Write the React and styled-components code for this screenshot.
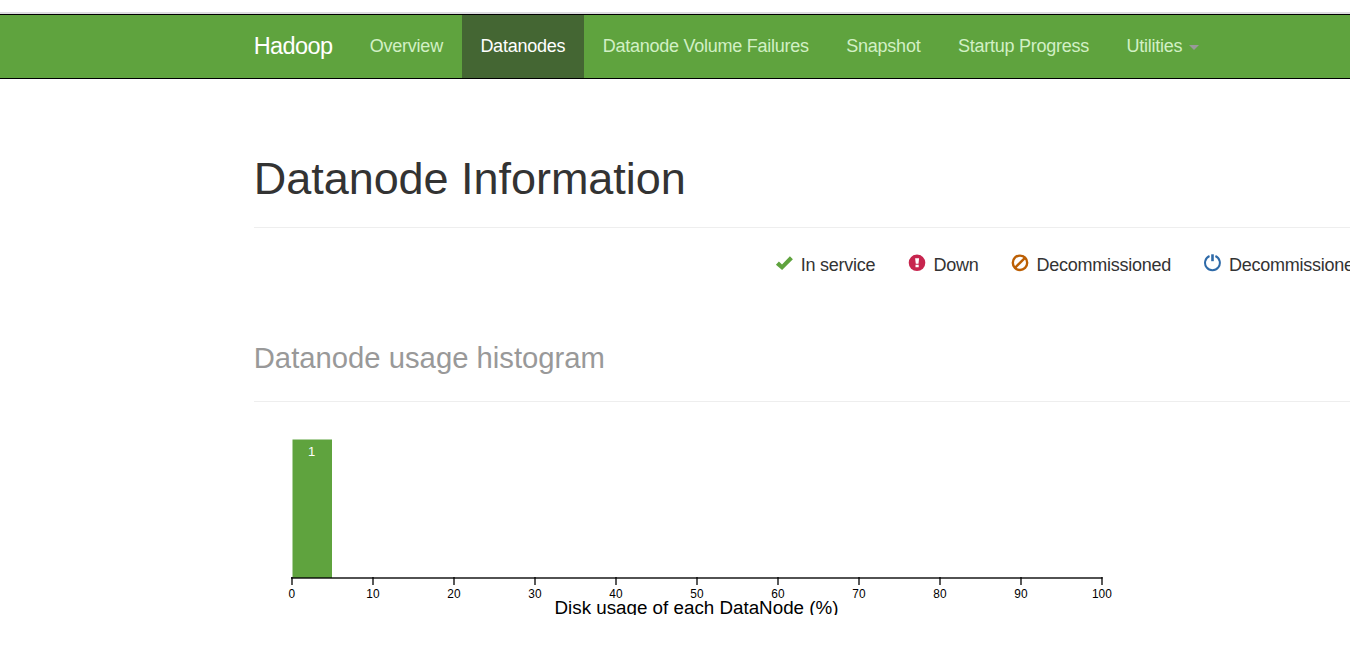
import React from "react";
import styled, { createGlobalStyle } from "styled-components";

const GlobalStyle = createGlobalStyle`
  html, body { margin: 0; background: #fff; overflow: hidden; }
  body { font-family: "Liberation Sans", Arial, sans-serif; font-size: 18px; letter-spacing: -0.25px; line-height: 25px; color: #333; }
`;
const Page = styled.div`
  width: 100%;
  height: 655px;
  overflow: hidden;
  padding-top: 12px;
  box-sizing: border-box;
`;
const Header = styled.header`
  display: flex;
  box-sizing: border-box;
  height: 67px;
  padding-left: 253.75px;
  background: #5fa33e;
  border-bottom: 1px solid #000;
  border-top: 2px solid #dcdce0;
  box-shadow: inset 0 1px 0 #000;
`;
const Brand = styled.a`
  padding: 20px 18.75px 0 0;
  font-size: 23.5px;
  letter-spacing: -0.62px;
  line-height: 25px;
  color: #fff;
`;
const Nav = styled.nav`
  display: flex;
  padding-top: 1px;
`;
const NavItem = styled.a`
  display: flex;
  align-items: center;
  gap: 7px;
  padding: 0 18.75px;
  white-space: nowrap;
  color: ${(p) => (p.$active ? "#fff" : "#d2f0c5")};
  background: ${(p) => (p.$active ? "#446633" : "transparent")};
`;
const Caret = styled.span`
  margin-top: 2px;
  border: 5px solid transparent;
  border-top-color: #999;
  border-bottom: 0;
`;
const Main = styled.main`
  padding-left: 253.75px;
`;
const Title = styled.h1`
  margin: 0;
  padding-top: 75px;
  height: 73px;
  font-size: 45px;
  letter-spacing: -0.04px;
  line-height: 50px;
  font-weight: 400;
  border-bottom: 1px solid #eee;
`;
const Legend = styled.ul`
  display: flex;
  margin: 0;
  padding: 25px 0 0 521.4px;
  list-style: none;
  width: 900px;
`;
const LegendItem = styled.li`
  display: flex;
  gap: 7.5px;
  width: ${(p) => p.$width}px;
  flex: none;
  white-space: nowrap;
  svg { margin-top: 1px; flex: none; }
`;
const Subtitle = styled.h3`
  margin: 0;
  padding-top: 64px;
  height: 59px;
  font-size: 29.25px;
  letter-spacing: 0;
  line-height: 33px;
  font-weight: 400;
  color: #999;
  border-bottom: 1px solid #eee;
`;
const Chart = styled.svg`
  display: block;
  overflow: hidden;
  letter-spacing: 0;
  font-family: "Liberation Sans", Arial, sans-serif;
`;

const navItems = ["Overview", "Datanodes", "Datanode Volume Failures", "Snapshot", "Startup Progress", "Utilities"];

const CheckIcon = () => (
  <svg width="18" height="18" viewBox="0 0 18 18">
    <path fill="#5fa33e" d="M0.9 10.8 3.9 7.6 7 10.4 14.9 2.3 17.9 5.2 7.1 16.1Z" />
  </svg>
);
const DownIcon = () => (
  <svg width="18" height="18" viewBox="0 0 18 18">
    <circle cx="9" cy="8.8" r="8.3" fill="#c7254e" />
    <path fill="#fff" d="M7.1 4.2H11.1L10.5 9.8H7.8ZM7.5 10.8H10.7V13.3H7.5Z" />
  </svg>
);
const BanIcon = () => (
  <svg width="18" height="18" viewBox="0 0 18 18" fill="none" stroke="#bc5f04" strokeWidth="2.4">
    <circle cx="9" cy="8.8" r="7.2" />
    <path d="M4 13.8 14 3.8" />
  </svg>
);
const PowerIcon = () => (
  <svg width="18" height="18" viewBox="0 0 18 18" fill="none" stroke="#2e6aa8" strokeWidth="2">
    <path d="M6.5 2A7.4 7.4 0 1 0 12.4 2" />
    <path d="M9.5 0.3V7.2" strokeWidth="2.6" />
  </svg>
);

const legend = [
  { label: "In service", Icon: CheckIcon, width: 132.8 },
  { label: "Down", Icon: DownIcon, width: 103 },
  { label: "Decommissioned", Icon: BanIcon, width: 192.5 },
  { label: "Decommissioned", Icon: PowerIcon, width: 160 },
];
const ticks = [0, 10, 20, 30, 40, 50, 60, 70, 80, 90, 100];

const Histogram = () => (
  <Chart width="900" height="213" viewBox="254 402 900 213">
    <rect x="292.5" y="439.5" width="39.5" height="138.5" fill="#5fa33e" />
    <text x="311.7" y="456" fontSize="13" textAnchor="middle" fill="#fff">1</text>
    <path d="M291 578H1102.5" stroke="#000" strokeOpacity="0.68" strokeWidth="2" />
    {ticks.map((t) => (
      <g key={t}>
        <path d={`M${292 + t * 8.1} 577V585`} stroke="#000" strokeWidth="1.3" />
        <text
          x={291.9 + t * 8.1}
          y="598"
          fontSize="13.5"
          textAnchor="middle"
          textLength={String(t).length * 6.6}
          lengthAdjust="spacingAndGlyphs"
        >{t}</text>
      </g>
    ))}
    <text x="554.5" y="614" fontSize="18.8">Disk usage of each DataNode (%)</text>
  </Chart>
);

export default function App() {
  return (
    <Page>
      <GlobalStyle />
      <Header>
        <Brand>Hadoop</Brand>
        <Nav>
          {navItems.map((n) => (
            <NavItem key={n} $active={n === "Datanodes"}>
              {n}
              {n === "Utilities" && <Caret />}
            </NavItem>
          ))}
        </Nav>
      </Header>
      <Main>
        <Title>Datanode Information</Title>
        <Legend>
          {legend.map(({ label, Icon, width }, i) => (
            <LegendItem key={i} $width={width}>
              <Icon />
              {label}
            </LegendItem>
          ))}
        </Legend>
        <Subtitle>Datanode usage histogram</Subtitle>
        <Histogram />
      </Main>
    </Page>
  );
}
